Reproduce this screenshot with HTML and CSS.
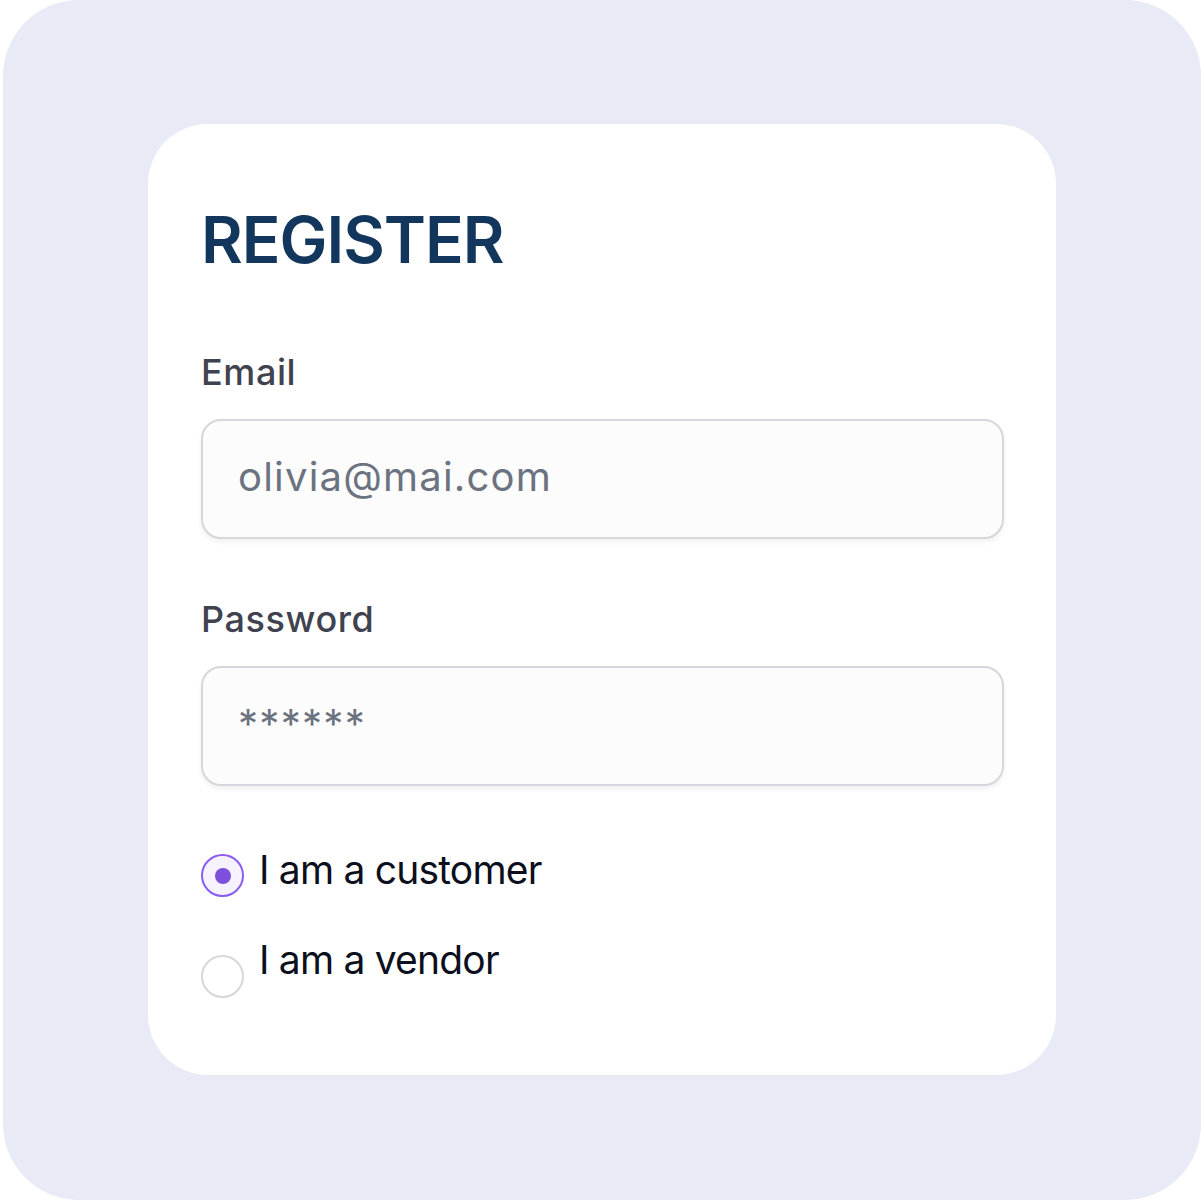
FILE: index.html
```html
<!DOCTYPE html>
<html lang="en">
<head>
<meta charset="utf-8">
<title>Register</title>
<link rel="stylesheet" href="styles.css">
</head>
<body>
<div class="backdrop">
  <form class="card">
    <h1 class="title">REGISTER</h1>
    <label class="field-label field-label--email">Email</label>
    <div class="input">olivia@mai.com</div>
    <label class="field-label field-label--password">Password</label>
    <div class="input input--password">******</div>
    <div class="radios">
      <div class="radio-row">
        <span class="radio radio--checked"><span class="radio-dot"></span></span>
        <span class="radio-label">I am a customer</span>
      </div>
      <div class="radio-row radio-row--second">
        <span class="radio radio--low"></span>
        <span class="radio-label">I am a vendor</span>
      </div>
    </div>
  </form>
</div>
</body>
</html>
```
FILE: styles.css
```css
* { box-sizing: border-box; }
html, body { margin: 0; padding: 0; background: #ffffff; }
body { font-family: Inter, "Noto Sans", sans-serif; }

.backdrop {
  margin-left: 3px;
  width: 1198px;
  height: 1200px;
  background: #e8eaf6;
  border-radius: 76px;
  padding-top: 124px;
  padding-left: 145px;
}

.card {
  width: 908px;
  height: 951px;
  background: #ffffff;
  border-radius: 60px;
  padding: 84px 52px 0 53px;
  display: flex;
  flex-direction: column;
}

.title {
  margin: 0;
  font-size: 64px;
  line-height: 64px;
  font-weight: 600;
  color: #12365c;
  letter-spacing: -1px;
}

.field-label {
  display: block;
  font-size: 36px;
  line-height: 36px;
  font-weight: 500;
  color: #40424f;
  letter-spacing: 0.6px;
}
.field-label--email { margin-top: 82px; }
.field-label--password { margin-top: 62px; }

.input {
  margin-top: 29px;
  height: 120px;
  border: 2px solid #d6d6dc;
  border-radius: 20px;
  background: #fcfcfd;
  box-shadow: 0 3px 5px rgba(20, 20, 40, 0.06);
  display: flex;
  align-items: center;
  padding-left: 35px;
  padding-bottom: 6px;
  font-size: 40px;
  letter-spacing: 1.2px;
  color: #6b7280;
}
.input--password {
  align-items: flex-start;
  padding-top: 31px;
  padding-bottom: 0;
  letter-spacing: 1.3px;
}

.radios {
  margin-top: 64px;
  display: flex;
  flex-direction: column;
  gap: 43px;
}

.radio-row {
  display: flex;
  align-items: flex-start;
  gap: 15px;
}

.radio {
  flex: none;
  width: 43px;
  height: 43px;
  border-radius: 50%;
  border: 2px solid #d6d6dc;
  background: #ffffff;
  margin-top: 4px;
  display: flex;
  align-items: center;
  justify-content: center;
}
.radio--checked {
  border-color: #8b5cf0;
  background: #f6f2ff;
}
.radio--low { margin-top: 15px; }

.radio-dot {
  width: 16px;
  height: 16px;
  border-radius: 50%;
  background: #7d50dc;
}

.radio-label {
  font-size: 39px;
  line-height: 40px;
  letter-spacing: -0.8px;
  color: #0c0f1c;
}
```
